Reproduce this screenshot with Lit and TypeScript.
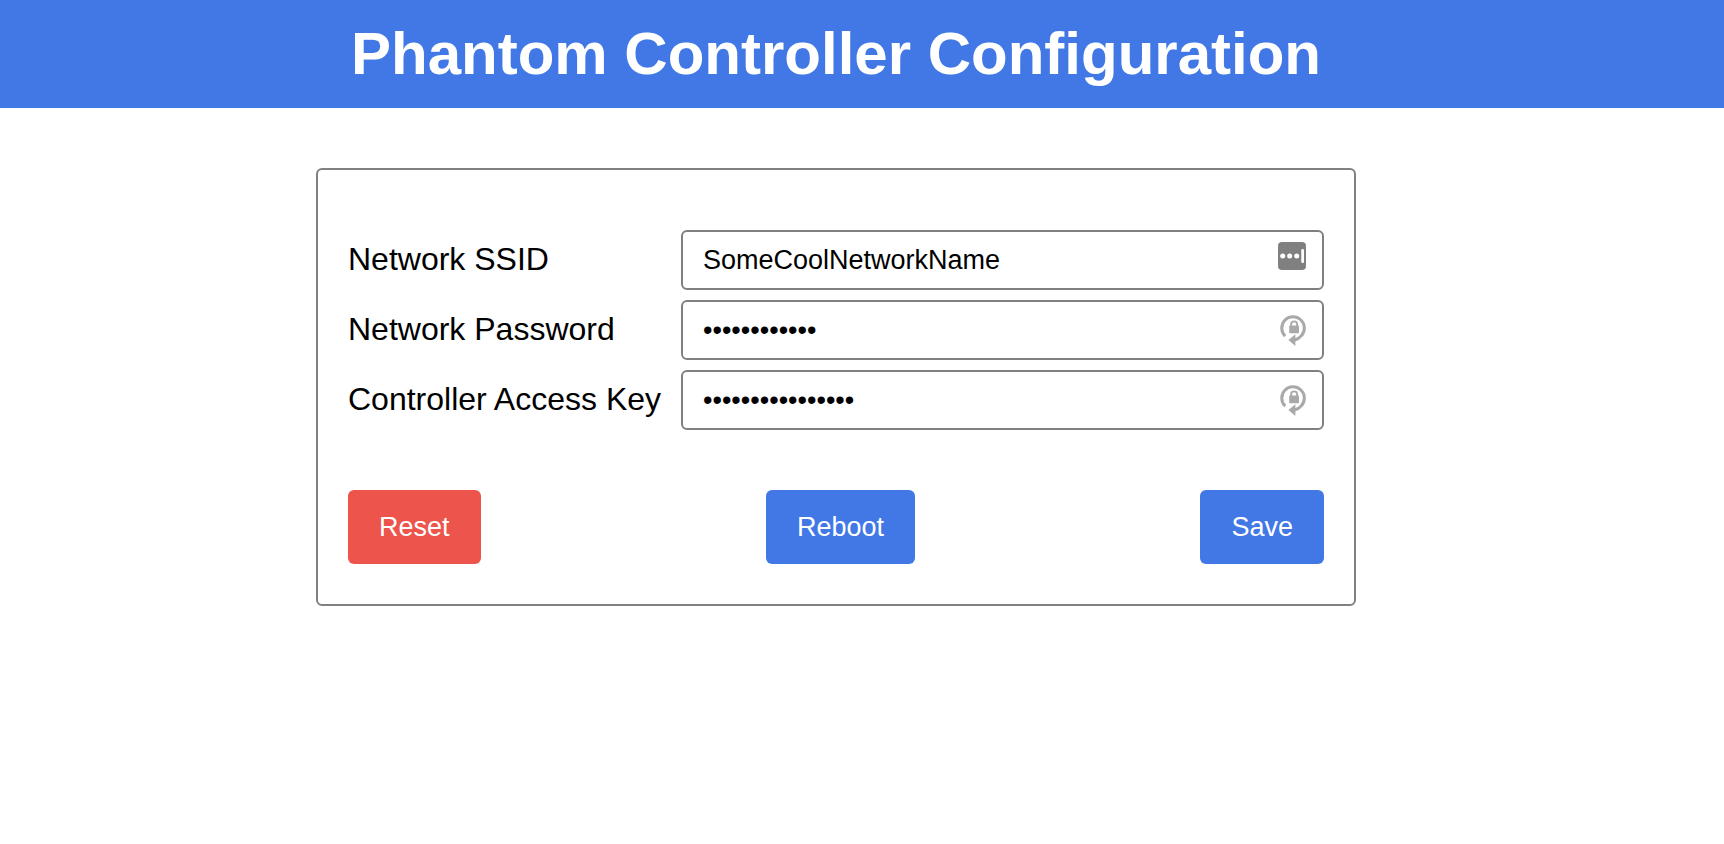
import { LitElement, html, css } from "lit";
import { customElement } from "lit/decorators.js";

const managerIcon = html`
  <svg class="icon" viewBox="0 0 28 28" width="28" height="28" aria-hidden="true">
    <rect width="28" height="28" rx="4" fill="#808080" />
    <g fill="#fff">
      <circle cx="4.7" cy="13.9" r="2.5" />
      <circle cx="11.7" cy="13.9" r="2.5" />
      <circle cx="18.7" cy="13.9" r="2.5" />
      <rect x="23.3" y="7" width="2.7" height="14" rx="1.2" />
    </g>
  </svg>
`;

const generateIcon = html`
  <svg class="icon" viewBox="0 0 28 34" width="28" height="34" aria-hidden="true">
    <path d="M5.2 23.2A11.3 11.3 0 1 1 21.5 22.6Q19 25.8 14.5 27" fill="none" stroke="#a9a9a9" stroke-width="3" />
    <path d="M8.4 27L15.4 21.2V33Z" fill="#a9a9a9" />
    <rect x="9.2" y="12.5" width="9.8" height="7.7" rx="0.8" fill="#a9a9a9" />
    <path d="M11.1 13V11.4A3 3 0 0 1 17.1 11.4V13" fill="none" stroke="#a9a9a9" stroke-width="1.9" />
  </svg>
`;

@customElement("app-root")
export class AppRoot extends LitElement {
  static styles = css`
    :host {
      display: block;
      font-family: "Liberation Sans", Arial, sans-serif;
      color: #000;
    }
    .header {
      background: #4178e6;
      padding: 20px 52px 20px 0;
    }
    .title {
      margin: 0;
      color: #fff;
      font-size: 60px;
      line-height: 68px;
      text-align: center;
    }
    .main {
      display: flex;
      justify-content: center;
      padding: 60px 52px 60px 0;
    }
    .card {
      box-sizing: border-box;
      width: 100%;
      max-width: 1040px;
      padding: 60px 30px 40px;
      border: 2px solid #808080;
      border-radius: 6px;
    }
    .fields {
      display: grid;
      grid-template-columns: max-content 1fr;
      column-gap: 20px;
      row-gap: 10px;
      align-items: center;
    }
    .label {
      font-size: 32px;
      line-height: 36px;
      padding-bottom: 2px;
    }
    .field {
      display: grid;
      align-items: center;
    }
    .input {
      grid-area: 1 / 1;
      box-sizing: border-box;
      width: 100%;
      min-width: 0;
      height: 60px;
      padding: 0 60px 0 20px;
      border: 2px solid #808080;
      border-radius: 6px;
      background: #fff;
      color: #000;
      font-family: inherit;
      font-size: 27px;
    }
    .hint {
      grid-area: 1 / 1;
      justify-self: end;
      display: flex;
      padding-right: 16px;
      pointer-events: none;
    }
    .hint.raised {
      padding-right: 18px;
      padding-bottom: 8px;
    }
    .icon {
      display: block;
    }
    .actions {
      display: flex;
      justify-content: space-between;
      margin-top: 60px;
    }
    .button {
      height: 74px;
      padding: 0 31px;
      border: none;
      border-radius: 6px;
      background: #4178e6;
      color: #fff;
      font-family: inherit;
      font-size: 27px;
    }
    .button.danger {
      background: #ec544c;
    }
  `;

  render() {
    return html`
      <header class="header">
        <h1 class="title">Phantom Controller Configuration</h1>
      </header>
      <main class="main">
        <form class="card" @submit=${(e: Event) => e.preventDefault()}>
          <div class="fields">
            <label class="label" for="ssid">Network SSID</label>
            <div class="field">
              <input class="input" id="ssid" type="text" value="SomeCoolNetworkName" />
              <span class="hint raised">${managerIcon}</span>
            </div>
            <label class="label" for="password">Network Password</label>
            <div class="field">
              <input class="input" id="password" type="password" value="abcdefghijkl" />
              <span class="hint">${generateIcon}</span>
            </div>
            <label class="label" for="key">Controller Access Key</label>
            <div class="field">
              <input class="input" id="key" type="password" value="abcdefghijklmnop" />
              <span class="hint">${generateIcon}</span>
            </div>
          </div>
          <div class="actions">
            <button class="button danger" type="reset">Reset</button>
            <button class="button" type="button">Reboot</button>
            <button class="button" type="submit">Save</button>
          </div>
        </form>
      </main>
    `;
  }
}
